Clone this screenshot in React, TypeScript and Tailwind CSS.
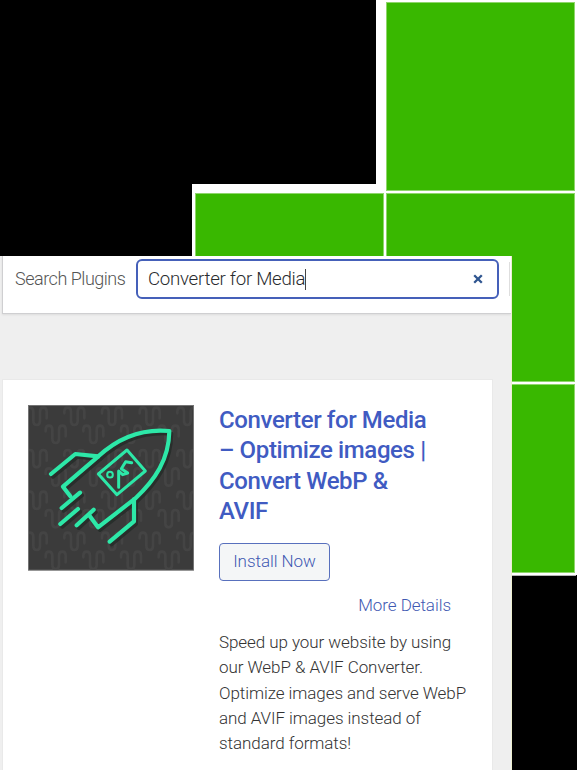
function GreenTile({ className = "" }: { className?: string }) {
  return <div className={`w-[189px] bg-[#39b800] border border-[#8fd66b] ${className}`} />;
}

function Backdrop() {
  return (
    <div className="[grid-area:1/1] flex flex-col bg-black">
      <div className="flex h-[575px]">
        <div className="w-48" />
        <div className="flex w-[184px] flex-col">
          <div className="h-[184px]" />
          <div className="flex flex-1 bg-white pt-[9px] pl-[3px]">
            <GreenTile className="h-[189px] shrink-0" />
          </div>
        </div>
        <div className="flex flex-1 bg-white">
          <div className="flex w-[10px] flex-col">
            <div className="h-[193px]" />
            <div className="h-[189px] w-2 border-t border-r border-[#8fd66b] bg-[#39b800]" />
          </div>
          <div className="flex flex-col gap-[2px] pt-[2px]">
            <GreenTile className="h-[189px]" />
            <GreenTile className="h-[189px]" />
            <GreenTile className="h-[189px]" />
          </div>
        </div>
      </div>
      <div className="ml-[512px] h-px w-16 bg-[#b5b5b5]" />
    </div>
  );
}

const squiggleRows = [38, 92, 165, 220, 290, 345, 413, 470];

function RocketIcon() {
  return (
    <svg viewBox="0 0 546 546" className="-mt-[10px] -ml-[8px] h-[182px] w-[182px] shrink-0">
      <rect x="25.5" y="31.5" width="495" height="494" fill="#3b3b3b" stroke="#747474" strokeWidth="3" />
      <svg x="27" y="33" width="492" height="491" viewBox="27 33 492 491">
        <g fill="none" stroke="#444444" strokeWidth="8" strokeLinecap="round">
          {squiggleRows.map((top, row) =>
            [0, 1, 2, 3, 4].map((col) => (
              <path
                key={`${row}-${col}`}
                transform={`translate(${(row % 2 ? 77 : 20) + col * 113} ${top})`}
                d="M0 17V12Q0 0 10 0Q20 0 20 12V40Q20 52 30 52Q40 52 40 40V12Q40 0 50 0Q60 0 60 12V32"
              />
            )),
          )}
        </g>
      </svg>
      <g fill="none" strokeLinecap="round" strokeLinejoin="round">
        <g stroke="#242b28" strokeWidth="12" transform="translate(6 8)" opacity=".8">
          <path d="M151 304L129 275L235 184C300 124 373 101 448 108C447 192 406 254 345 311L234 397L207 360" />
          <path d="M93 237L166 177L235 184M342 313V379L269 440M125 339L180 293M121 387L174 342M170 391L221 344" />
        </g>
        <g stroke="#2de8a8" strokeWidth="12.5">
          <path d="M151 304L129 275L235 184C300 124 373 101 448 108C447 192 406 254 345 311L234 397L207 360" />
          <path d="M93 237L166 177L235 184M342 313V379L269 440M125 339L180 293M121 387L174 342M170 391L221 344" />
        </g>
        <g stroke="#2de8a8" strokeWidth="9">
          <path d="M321 165L376 228L291 299L235 237Z" />
          <circle cx="270" cy="239" r="8.5" strokeWidth="6" />
          <path d="M296 277V228L308 239L323 234L304 221L317 200L335 203" />
        </g>
      </g>
    </svg>
  );
}

function SearchBar() {
  return (
    <div className="flex h-[58px] border-b border-l border-[#cfcfd1] bg-white shadow-[0_1px_2px_rgba(0,0,0,0.08)]">
      <label className="mt-[9px] ml-[12px] w-[121px] text-[18px] leading-[28px] font-light tracking-[-0.48px] whitespace-nowrap text-[#555]">
        Search Plugins
      </label>
      <div className="mt-[3px] flex h-[40px] w-[363px] items-center rounded-[6px] border-2 border-[#4560b9] pr-[14px] pl-[10px]">
        <span className="pb-px text-[18.7px] leading-[28px] font-light tracking-[-0.29px] whitespace-nowrap text-[#292b2e]">
          Converter for Media
        </span>
        <span className="h-[21px] w-px bg-[#444]" />
        <svg viewBox="0 0 10 10" className="ml-auto h-[10px] w-[10px]">
          <path d="M1.2 1.2L8.8 8.8M8.8 1.2L1.2 8.8" stroke="#2f5590" strokeWidth="2.3" />
        </svg>
      </div>
      <div className="mt-[6px] mr-px ml-auto h-[34px] w-px bg-[#dedede]" />
    </div>
  );
}

function PluginCard() {
  return (
    <article className="mt-[65px] flex h-[392px] w-[491px] border border-[#e9e9e9] bg-white pt-[25px] pl-[25px]">
      <div className="flex w-[191px] shrink-0">
        <RocketIcon />
      </div>
      <div className="w-[260px]">
        <h3 className="h-[121px] text-[24px] leading-[30.25px] font-medium tracking-[-0.38px] whitespace-nowrap text-[#405bc2]">
          Converter for Media
          <br />– Optimize images |
          <br />
          Convert WebP &amp;
          <br />
          AVIF
        </h3>
        <button className="mt-[17px] block h-[38px] w-[111px] rounded-[4px] border border-[#5870bd] bg-[#f4f6f7] pb-[2px] text-[17px] leading-[34px] font-light tracking-[-0.05px] whitespace-nowrap text-[#3f59b2]">
          Install Now
        </button>
        <a className="mt-[12px] block w-[232px] text-right text-[17px] leading-[25px] font-light tracking-[-0.06px] text-[#3f59b2]">
          More Details
        </a>
        <p className="mt-[12px] text-[17px] leading-[25.3px] font-light tracking-[-0.07px] whitespace-nowrap text-[#333]">
          Speed up your website by using
          <br />
          our WebP &amp; AVIF Converter.
          <br />
          Optimize images and serve WebP
          <br />
          and AVIF images instead of
          <br />
          standard formats!
        </p>
      </div>
    </article>
  );
}

export default function App() {
  return (
    <main className="grid h-[770px] w-[577px] overflow-hidden bg-black font-['Roboto',sans-serif]">
      <Backdrop />
      <section className="[grid-area:1/1] mt-[256px] h-[514px] w-[512px] overflow-hidden border-r border-[#eeefd0] bg-[#efefef] pl-[2px]">
        <SearchBar />
        <PluginCard />
      </section>
    </main>
  );
}
